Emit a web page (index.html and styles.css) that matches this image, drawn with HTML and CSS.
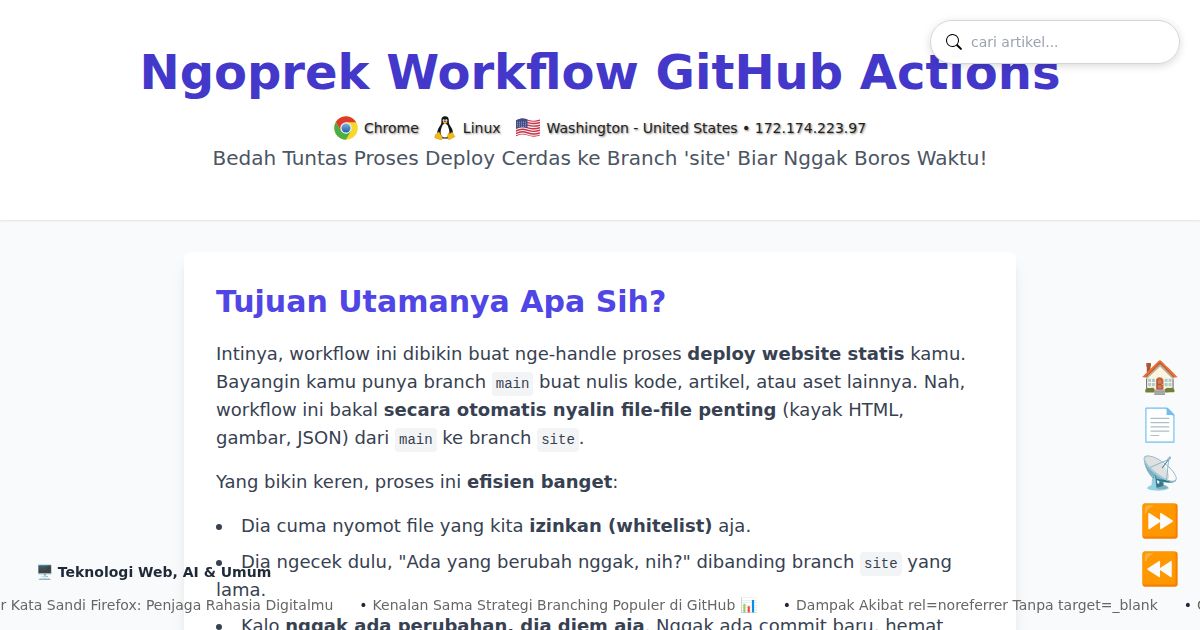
FILE: index.html
```html
<!DOCTYPE html>
<html lang="id">
<head>
<meta charset="utf-8">
<meta name="viewport" content="width=device-width, initial-scale=1">
<title>Ngoprek Workflow GitHub Actions</title>
<link rel="stylesheet" href="styles.css">
</head>
<body>
<form class="search" role="search">
  <svg class="search-icon" viewBox="0 0 16 16" aria-hidden="true"><path d="M11.742 10.344a6.5 6.5 0 1 0-1.397 1.398l3.85 3.85a1 1 0 0 0 1.415-1.414l-3.868-3.834zM12 6.5a5.5 5.5 0 1 1-11 0 5.5 5.5 0 0 1 11 0z"/></svg>
  <input class="search-input" type="search" aria-label="Cari artikel" placeholder="cari artikel...">
</form>
<header class="hero">
  <h1 class="hero-title">Ngoprek Workflow GitHub Actions</h1>
  <div class="visitor">
    <span class="visitor-item">
      <svg class="visitor-icon" viewBox="0 0 48 48" aria-hidden="true"><defs><linearGradient id="blue" x2="0" y2="1"><stop stop-color="#7fb2de"/><stop offset="1" stop-color="#1f5fa8"/></linearGradient></defs><circle cx="24" cy="24" r="23.500" fill="#f9d62c"/><path d="M24 12.500H44.400A23.500 23.500 0 0 0 3.700 12.200L14 29.800Z" fill="#dd3a30"/><path d="M3.700 12.200A23.500 23.500 0 0 0 23.500 47.500L34 29.800 24 35.500 14 29.800Z" fill="#4aae48"/><circle cx="24" cy="24" r="11.500" fill="#f1f1f1"/><circle cx="24" cy="24" r="9" fill="url(#blue)"/></svg>
      Chrome
    </span>
    <span class="visitor-item">
      <svg class="visitor-icon" viewBox="0 0 24 24" aria-hidden="true"><path d="M12 .2C9.300.2 8.200 2 8.400 4.500c.2 3-.4 4-2 6.200C4.700 13.300 3.800 16 4.300 19l4 3.500h7.400l4-3.500c.6-4-.3-6-2.200-8.700-1.500-2.300-1.800-3-1.700-6C15.900 1.800 14.700.2 12 .2Z" fill="#151515"/><path d="M12 8c-1 0-1.800 0-2.400 1-.7 2-2 4.400-2 7.500 0 3 1.700 5 4.400 5s4.400-2 4.400-5c0-3-1.100-5.500-2-7.500C13.800 8 13 8 12 8Z" fill="#fff"/><ellipse cx="10.700" cy="4.600" rx="1" ry="1.400" fill="#fff"/><ellipse cx="13.300" cy="4.600" rx="1.100" ry="1.400" fill="#fff"/><circle cx="11" cy="4.900" r=".5"/><circle cx="13" cy="4.900" r=".5"/><path d="M9.500 6.500 12 5.400l2.600 1.100L12 8.300Z" fill="#f4b915"/><path d="M4.500 16.500c1.300-1 2 0 3 1.700 1 1.600 2.500 2.700 2 4-.6 1.800-2.600 1.800-4 .9-1.500-.8-3.500-.5-3.700-1.700-.1-.9.500-1.200.4-2.300 0-1 1-.8 1.500-1.200zM19.500 16.500c-1.300-.8-1.500.8-2.700 1-1.300.1-1.500-.8-1.800.5-.3 1.200-.7 3-.4 4.200.4 1.600 2.300 1.600 3.400.6 1.200-1 3.700-1.500 3.900-2.400.1-.8-1.300-1-1.500-2.100-.1-.8-.2-1.400-.9-1.800z" fill="#f4b915" stroke="#a86d00" stroke-width=".3"/></svg>
      Linux
    </span>
    <span class="visitor-item">
      <svg class="visitor-icon visitor-flag" viewBox="0 0 26 20" aria-hidden="true"><clipPath id="flag"><path d="M1 2.500C6-.2 9 .3 13 1.700s8 1.500 12-.4v15.900c-4 2-8 1.700-12 .4s-7-1.800-12 .9z"/></clipPath><g clip-path="url(#flag)"><path d="M0 0h26v20H0z" fill="#f4f1f1"/><g fill="none" stroke="#c9344b" stroke-width="1.400"><path d="M0 3C6-.2 9 .7 13 2s8 1.500 13-.4M0 5.600C6 2.400 9 3.300 13 4.600s8 1.500 13-.4M0 8.200C6 5 9 5.900 13 7.200s8 1.500 13-.4M0 10.800C6 7.600 9 8.500 13 9.800s8 1.500 13-.4M0 13.400c6-3.200 9-2.300 13-1s8 1.500 13-.4M0 16c6-3.200 9-2.300 13-1s8 1.500 13-.4M0 18.600c6-3.200 9-2.300 13-1s8 1.500 13-.4"/></g><path d="M0 0h12.500v10C8 8.600 5 9 0 11z" fill="#3c4d87"/><path d="M2 4.200h10M2 6.200h10M2 8.200h10" stroke="#c9cee2" stroke-width=".7" stroke-dasharray="1 1"/></g></svg>
      Washington - United States • 172.174.223.97
    </span>
  </div>
  <p class="hero-subtitle">Bedah Tuntas Proses Deploy Cerdas ke Branch 'site' Biar Nggak Boros Waktu!</p>
</header>
<main class="content">
  <section class="card">
    <h2 class="card-title">Tujuan Utamanya Apa Sih?</h2>
    <p class="card-text">Intinya, workflow ini dibikin buat nge-handle proses <strong>deploy website statis</strong> kamu. Bayangin kamu punya branch <code class="code">main</code> buat nulis kode, artikel, atau aset lainnya. Nah, workflow ini bakal <strong>secara otomatis nyalin file-file penting</strong> (kayak HTML, gambar, JSON) dari <code class="code">main</code> ke branch <code class="code">site</code>.</p>
    <p class="card-text">Yang bikin keren, proses ini <strong>efisien banget</strong>:</p>
    <ul class="card-list">
      <li>Dia cuma nyomot file yang kita <strong>izinkan (whitelist)</strong> aja.</li>
      <li>Dia ngecek dulu, "Ada yang berubah nggak, nih?" dibanding branch <code class="code">site</code> yang lama.</li>
      <li>Kalo <strong>nggak ada perubahan, dia diem aja</strong>. Nggak ada commit baru, hemat</li>
    </ul>
  </section>
</main>
<nav class="side-nav" aria-label="Navigasi">
  <a class="side-link" href="#home" aria-label="Beranda">🏠</a>
  <a class="side-link" href="#artikel" aria-label="Artikel">📄</a>
  <a class="side-link" href="#rss" aria-label="RSS">📡</a>
  <a class="side-link" href="#next" aria-label="Berikutnya">⏩</a>
  <a class="side-link" href="#prev" aria-label="Sebelumnya">⏪</a>
</nav>
<aside class="ticker">
  <strong class="ticker-title">🖥️ Teknologi Web, AI &amp; Umum</strong>
  <ul class="ticker-track">
    <li class="ticker-item"><a class="ticker-link" href="#a1">er Kata Sandi Firefox: Penjaga Rahasia Digitalmu</a></li>
    <li class="ticker-item"><a class="ticker-link" href="#a2">Kenalan Sama Strategi Branching Populer di GitHub 📊</a></li>
    <li class="ticker-item"><a class="ticker-link" href="#a3">Dampak Akibat rel=noreferrer Tanpa target=_blank</a></li>
    <li class="ticker-item"><a class="ticker-link" href="#a4">C</a></li>
  </ul>
</aside>
</body>
</html>
```
FILE: styles.css
```css
* { box-sizing: border-box; margin: 0; }
body {
  height: 100vh;
  overflow: hidden;
  background: #f9fafb;
  color: #1f2937;
  font-family: "DejaVu Sans", sans-serif;
  font-size: 16px;
}
.search {
  position: fixed;
  z-index: 3;
  top: 20px;
  right: 20px;
  display: flex;
  align-items: center;
  gap: 9px;
  width: 250px;
  height: 44px;
  padding: 0 15px;
  border: 1px solid #d1d5db;
  border-radius: 22px;
  background: rgba(255, 255, 255, 0.95);
  backdrop-filter: blur(8px);
  box-shadow: 0 2px 8px rgba(0, 0, 0, 0.15);
}
.search-icon { flex: none; width: 16px; height: 16px; }
.search-input {
  flex: 1;
  min-width: 0;
  padding: 0;
  border: 0;
  outline: 0;
  background: none;
  font: 14px "DejaVu Sans", sans-serif;
}
.search-input::placeholder { color: #9ca3af; }
.hero {
  padding: 48px 16px;
  background: #fff;
  box-shadow: 0 1px 2px rgba(0, 0, 0, 0.1);
  text-align: center;
}
.hero-title { color: #4338ca; font-size: 48px; line-height: 48px; }
.visitor {
  display: flex;
  justify-content: center;
  gap: 14px;
  margin-top: 20px;
  color: #222;
  font-size: 14px;
  line-height: 24px;
  text-shadow: 1px 1px 2px rgba(0, 0, 0, 0.5);
}
.visitor-item { display: flex; align-items: center; gap: 6px; }
.visitor-icon { width: 24px; height: 24px; }
.visitor-flag { width: 26px; height: 20px; }
.hero-subtitle { margin-top: 4px; color: #4b5563; font-size: 20px; line-height: 28px; }
.content { max-width: 896px; margin: 0 auto; padding: 32px; }
.card {
  padding: 32px;
  border-radius: 8px;
  background: #fff;
  box-shadow: 0 10px 15px -3px rgba(0, 0, 0, 0.1), 0 4px 6px -4px rgba(0, 0, 0, 0.1);
  color: #374151;
  font-size: 18px;
  line-height: 28px;
}
.card-title { margin-bottom: 20px; color: #4f46e5; font-size: 30px; line-height: 36px; }
.card-text { margin-bottom: 16px; }
.card-list { padding: 0; list-style: disc inside; }
.card-list li + li { margin-top: 8px; }
.code {
  padding: 4px;
  border-radius: 4px;
  background: #f3f4f6;
  font-family: "Liberation Mono", monospace;
  font-size: 14px;
  line-height: 20px;
}
.side-nav {
  position: fixed;
  z-index: 2;
  right: 20px;
  bottom: 41px;
  display: flex;
  flex-direction: column;
  gap: 8px;
}
.side-link {
  width: 40px;
  height: 40px;
  font-size: 32px;
  line-height: 40px;
  text-align: center;
  text-decoration: none;
}
.ticker {
  position: fixed;
  z-index: 1;
  right: 0;
  bottom: 0;
  left: 0;
  overflow: hidden;
  padding-bottom: 13px;
  font-size: 14px;
  line-height: 24px;
  white-space: nowrap;
}
.ticker-title { display: block; padding: 0 36px; margin-bottom: 9px; }
.ticker-track { display: flex; gap: 26px; margin-left: -8px; padding: 0; list-style: none; }
.ticker-item { display: flex; gap: 5px; }
.ticker-item::before { content: "•"; }
.ticker-item:first-child::before { content: none; }
.ticker-link { color: #666; text-decoration: none; }
```
